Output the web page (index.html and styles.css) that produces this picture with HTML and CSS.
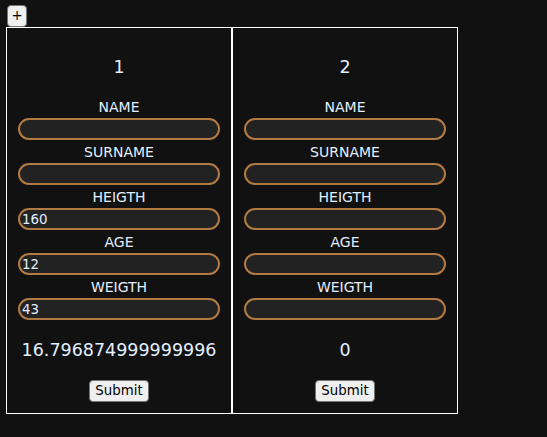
FILE: index.html
```html
<!DOCTYPE html>
<html>
<head>
<meta charset="utf-8">
<link rel="stylesheet" href="styles.css">
</head>
<body>
<div class="app">
  <button class="add">+</button>
  <div class="cards">
    <div class="card">
      <div class="title">1</div>
      <label class="label">NAME</label>
      <input class="field" type="text" value="">
      <label class="label">SURNAME</label>
      <input class="field" type="text" value="">
      <label class="label">HEIGTH</label>
      <input class="field" type="text" value="160">
      <label class="label">AGE</label>
      <input class="field" type="text" value="12">
      <label class="label">WEIGTH</label>
      <input class="field" type="text" value="43">
      <div class="result">16.796874999999996</div>
      <button class="submit">Submit</button>
    </div>
    <div class="card">
      <div class="title">2</div>
      <label class="label">NAME</label>
      <input class="field" type="text" value="">
      <label class="label">SURNAME</label>
      <input class="field" type="text" value="">
      <label class="label">HEIGTH</label>
      <input class="field" type="text" value="">
      <label class="label">AGE</label>
      <input class="field" type="text" value="">
      <label class="label">WEIGTH</label>
      <input class="field" type="text" value="">
      <div class="result">0</div>
      <button class="submit">Submit</button>
    </div>
  </div>
</div>
</body>
</html>
```

FILE: styles.css
```css
html, body {
  margin: 0;
  padding: 0;
  background: #111111;
}

body {
  font-family: "DejaVu Sans", sans-serif;
  color: #e3efff;
}

.app {
  display: flex;
  flex-direction: column;
  align-items: flex-start;
}

.add,
.submit {
  box-sizing: border-box;
  background: #efefef;
  border: 1px solid #767676;
  border-radius: 4px;
  color: #000000;
  font-family: "DejaVu Sans", sans-serif;
  font-size: 13.33px;
  line-height: 16px;
}

.add {
  margin: 5px 0 0 7px;
  width: 20px;
  height: 22px;
  padding: 0;
}

.cards {
  display: flex;
  margin-left: 6px;
}

.card {
  width: 224px;
  border: 1px solid #ffffff;
  display: flex;
  flex-direction: column;
  align-items: center;
  padding: 0 0 11px;
}

.title {
  margin: 29px 0 21px;
  font-size: 17.5px;
  line-height: 21px;
}

.label {
  display: block;
  font-size: 14px;
  line-height: 17px;
}

.field {
  display: block;
  box-sizing: border-box;
  width: 202px;
  height: 22px;
  margin: 2px 0 4px;
  padding: 1px 2px;
  border: 2px solid #b27a43;
  border-radius: 11px;
  background: #222222;
  color: #e3efff;
  font-family: "DejaVu Sans", sans-serif;
  font-size: 13.33px;
  outline: none;
}

.result {
  margin-top: 16px;
  font-size: 17.5px;
  line-height: 21px;
}

.submit {
  margin-top: 19px;
  height: 22px;
  padding: 0 5px;
}
```
